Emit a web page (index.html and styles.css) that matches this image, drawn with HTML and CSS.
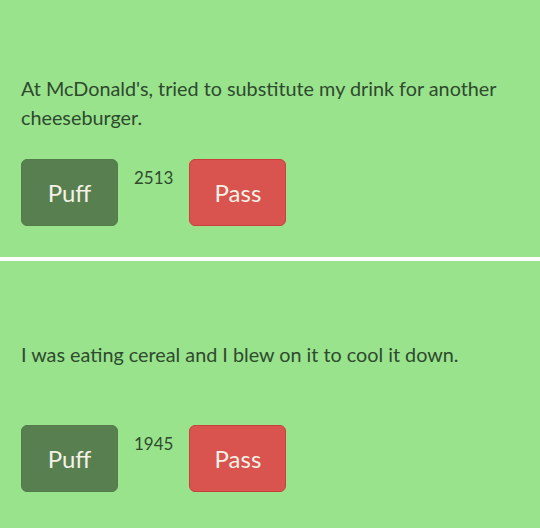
FILE: index.html
```html
<!DOCTYPE html>
<html lang="en">
<head>
    <meta charset="UTF-8">
    <meta name="viewport" content="width=device-width, initial-scale=1.0">
    <title>Puff or Pass</title>
    <link rel="stylesheet" href="styles.css">
</head>
<body>

<div class="card">
    <p class="quote">At McDonald's, tried to substitute my drink for another cheeseburger.</p>
    <div class="actions">
        <button class="btn btn-puff">Puff</button>
        <span class="count">2513</span>
        <button class="btn btn-pass">Pass</button>
    </div>
</div>

<div class="card card-second">
    <p class="quote">I was eating cereal and I blew on it to cool it down.</p>
    <div class="actions">
        <button class="btn btn-puff">Puff</button>
        <span class="count">1945</span>
        <button class="btn btn-pass">Pass</button>
    </div>
</div>

</body>
</html>
```

FILE: styles.css
```css
body {
    margin: 0;
    background-color: #fff;
    font-family: Lato, "Open Sans", sans-serif;
}
.card {
    height: 257px;
    box-sizing: border-box;
    padding: 74px 20px 0 21px;
    background-color: #99e38d;
}
.card-second {
    height: 267px;
    margin-top: 4px;
    padding-top: 79px;
}
.quote {
    margin: 0;
    min-height: 58px;
    font-size: 19.8px;
    line-height: 29px;
    color: #2f4a2d;
}
.actions {
    display: flex;
    align-items: flex-start;
    gap: 16px;
    margin-top: 27px;
}
.btn {
    width: 97px;
    height: 67px;
    border-radius: 6px;
    font-family: inherit;
    font-size: 24px;
    color: #f4f2e6;
    cursor: pointer;
}
.btn-puff {
    background-color: #587f4f;
    border: 1px solid #557a4c;
}
.btn-pass {
    background-color: #d9534f;
    border: 1px solid #c9403c;
}
.count {
    margin-top: 9px;
    font-size: 17px;
    line-height: 20px;
    color: #2f4a2d;
}
```
